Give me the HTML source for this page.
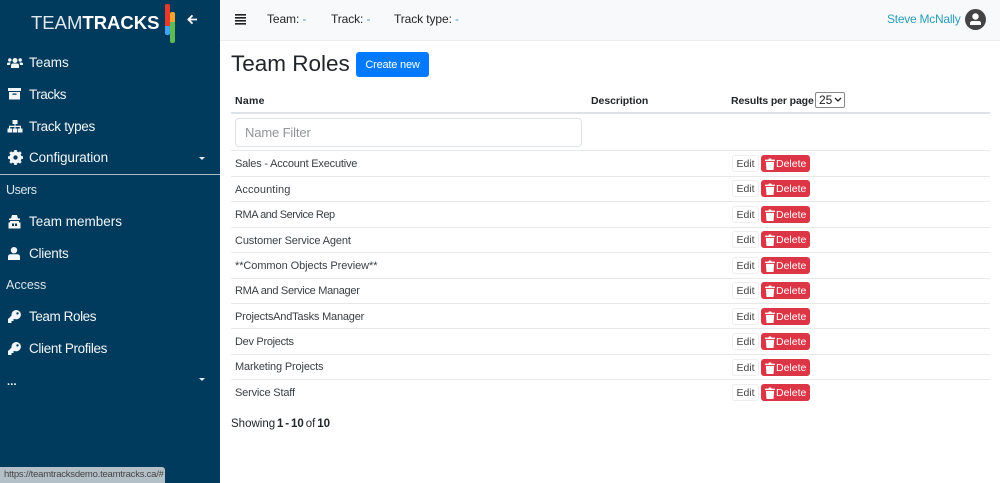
<!DOCTYPE html>
<html><head><meta charset="utf-8"><title>Team Roles</title>
<style>
*{box-sizing:border-box}
html,body{margin:0;padding:0;width:1000px;height:483px;overflow:hidden;background:#fff;font-family:"Liberation Sans",sans-serif}
.a{position:absolute;white-space:nowrap;line-height:1}
#side{position:absolute;left:0;top:0;width:220px;height:483px;background:#003a5c}
#top{position:absolute;left:220px;top:0;width:780px;height:41px;background:#f8f9fa;border-bottom:1px solid #e9ecef}
.n{color:#f2f6f8;font-size:13.5px;left:29px}
.sec{color:#dbe5ea;font-size:12.5px;left:6px}
.t{color:#212529;font-size:12px;letter-spacing:-.1px;top:13px}
.t span{color:#3d9bd8}
.th{font-size:10.5px;font-weight:bold;color:#212529;top:96px}
.r{color:#3a3f44;font-size:11px;left:235px}
.hr{position:absolute;left:231px;width:759px;height:1px;background:#e6e8ea}
.edit{position:absolute;left:732px;width:27px;height:17px;border:1px solid #eceef0;border-radius:3px;color:#444;font-size:10.5px;line-height:16px;text-align:center;background:#fff}
.del{position:absolute;left:761px;width:49px;height:17px;border-radius:3px;background:#dc3545;color:#fff;font-size:10.5px;line-height:18px;padding-left:15px}
.del svg{position:absolute;left:4px;top:2.5px}
svg{position:absolute;display:block}
</style></head><body>
<div id="side">
<div class="a" style="left:31px;top:11px;font-size:18.5px;line-height:24px;color:#dfe8ec">TEAM<b style="color:#fff">TRACKS</b></div>
<div style="position:absolute;left:165px;top:4px;width:5px;height:22px;background:#e8392c;border-radius:2px 2px 0 0"></div>
<div style="position:absolute;left:165px;top:26px;width:5px;height:9px;background:#3fa4ee;border-radius:0 0 2px 2px"></div>
<div style="position:absolute;left:170px;top:12px;width:5px;height:11px;background:#f5a52c;border-radius:2px 2px 0 0"></div>
<div style="position:absolute;left:170px;top:22px;width:5px;height:21px;background:#5dbb55;border-radius:0 0 2px 2px"></div>
<svg style="left:187px;top:14px" width="11" height="11" viewBox="0 0 12 12"><path d="M11 6H2M6 1.500 1.500 6 6 10.500" fill="none" stroke="#fff" stroke-width="2"/></svg>

<svg style="left:7px;top:57px" width="16" height="12" viewBox="0 0 16 12" fill="#f2f6f8"><circle cx="8" cy="3.500" r="2.500"/><circle cx="2.800" cy="3" r="1.700"/><circle cx="13.200" cy="3" r="1.700"/><path d="M4 11V8.500Q4 6.500 6 6.500H10Q12 6.500 12 8.500V11ZM0 8V7Q0 5.500 1.500 5.500H3.500L3 8ZM16 8V7Q16 5.500 14.500 5.500H12.500L13 8Z"/></svg>
<div class="a n" style="top:56px">Teams</div>
<svg style="left:8px;top:88px" width="13" height="12" viewBox="0 0 13 12" fill="#f2f6f8"><path d="M0 0H13V3H0ZM1 4H12V11.500H1ZM4.500 5.500V6.800H8.500V5.500Z" fill-rule="evenodd"/></svg>
<div class="a n" style="top:88px;letter-spacing:-.5px">Tracks</div>
<svg style="left:7px;top:120px" width="16" height="13" viewBox="0 0 16 13" fill="#f2f6f8"><path d="M5.500 0H10.500V4H8.500V5.800H14V8.500H15.500V12.500H11V8.500H12.800V7H8.500V8.500H10.300V12.500H5.700V8.500H7.500V7H3.200V8.500H5V12.500H.5V8.500H2V5.800H7.500V4H5.500Z"/></svg>
<div class="a n" style="top:120px;letter-spacing:-.3px">Track types</div>
<svg style="left:8px;top:150px" width="15" height="15" viewBox="0 0 16 16"><circle cx="8" cy="8" r="4.800" fill="none" stroke="#f2f6f8" stroke-width="3.400"/><path d="M8 0V16M0 8H16M2.300 2.300 13.700 13.700M13.700 2.300 2.300 13.700" stroke="#f2f6f8" stroke-width="2.800"/><circle cx="8" cy="8" r="2.300" fill="#003a5c"/></svg>
<div class="a n" style="top:151px;letter-spacing:-.1px">Configuration</div>
<div style="position:absolute;left:199px;top:157px;border:3px solid transparent;border-top:3px solid #e6edf0;border-bottom:0"></div>
<div style="position:absolute;left:0;top:174px;width:220px;height:1px;background:#a9bac4"></div>
<div class="a sec" style="top:184px;letter-spacing:-.4px">Users</div>
<svg style="left:8px;top:215px" width="13" height="14" viewBox="0 0 13 14" fill="#f2f6f8"><path d="M4 0H9L10 3.500H12V5H1V3.500H3ZM2 6H11V7.500H12.500V13.500H.5V7.500H2ZM4 8.500V11H6V8.500ZM7 8.500V11H9V8.500Z" fill-rule="evenodd"/></svg>
<div class="a n" style="top:215px">Team members</div>
<svg style="left:8px;top:247px" width="12" height="13" viewBox="0 0 12 13" fill="#f2f6f8"><circle cx="6" cy="3.200" r="3.200"/><path d="M0 13V10Q0 7.300 2.700 7.300H9.300Q12 7.300 12 10V13Z"/></svg>
<div class="a n" style="top:247px;letter-spacing:-.25px">Clients</div>
<div class="a sec" style="top:279px">Access</div>
<svg style="left:8px;top:310px" width="13" height="13" viewBox="0 0 13 13" fill="#f2f6f8"><circle cx="8.200" cy="4.700" r="4.700"/><path d="M4.500 4.500 0 9V13H3.500V11H5.500V9H7.500L8.500 7Z"/><circle cx="9.500" cy="3.400" r="1.200" fill="#003a5c"/></svg>
<div class="a n" style="top:310px;letter-spacing:-.42px">Team Roles</div>
<svg style="left:8px;top:342px" width="13" height="13" viewBox="0 0 13 13" fill="#f2f6f8"><circle cx="8.200" cy="4.700" r="4.700"/><path d="M4.500 4.500 0 9V13H3.500V11H5.500V9H7.500L8.500 7Z"/><circle cx="9.500" cy="3.400" r="1.200" fill="#003a5c"/></svg>
<div class="a n" style="top:342px;letter-spacing:-.35px">Client Profiles</div>
<div class="a" style="left:7px;top:377px;font-size:11px;color:#fff;font-weight:bold;letter-spacing:.2px">...</div>
<div style="position:absolute;left:199px;top:378px;border:3px solid transparent;border-top:3px solid #e6edf0;border-bottom:0"></div>
</div>

<div id="top"></div>
<svg style="left:235px;top:14px" width="11" height="11" viewBox="0 0 11 11" fill="#222"><path d="M0 0H11V1.600H0ZM0 3H11V4.600H0ZM0 6H11V7.600H0ZM0 9H11V10.600H0Z"/></svg>
<div class="a t" style="left:267px">Team: <span>-</span></div>
<div class="a t" style="left:331px">Track: <span>-</span></div>
<div class="a t" style="left:394px">Track type: <span>-</span></div>
<div class="a" style="left:887px;top:13px;font-size:12px;color:#2a9fb8;letter-spacing:-.25px">Steve McNally</div>
<svg style="left:965px;top:9px" width="21" height="21" viewBox="0 0 21 21"><circle cx="10.500" cy="10.500" r="10.500" fill="#444"/><circle cx="10.500" cy="7.500" r="3.200" fill="#fff"/><path d="M5 16V14.500Q5 12 7.500 12H13.500Q16 12 16 14.500V16Z" fill="#fff"/></svg>

<div class="a" style="left:231px;top:53px;font-size:22.5px;color:#212529">Team Roles</div>
<div style="position:absolute;left:356px;top:52px;width:73px;height:25px;background:#007bff;border-radius:3px;color:#fff;font-size:11px;line-height:26px;text-align:center;letter-spacing:-.2px">Create new</div>

<div class="a th" style="left:235px;letter-spacing:.3px">Name</div>
<div class="a th" style="left:591px;letter-spacing:-.05px">Description</div>
<div class="a th" style="left:731px;letter-spacing:-.12px">Results per page</div>
<div style="position:absolute;left:815px;top:92px;width:30px;height:16px;border:1px solid #888;border-radius:2px;background:#fff;font-size:12px;line-height:15px;padding-left:3px;color:#222">25</div>
<svg style="left:834px;top:97px" width="8" height="6" viewBox="0 0 8 6"><path d="M1 1 4 4 7 1" fill="none" stroke="#222" stroke-width="1.300"/></svg>
<div style="position:absolute;left:231px;top:112px;width:759px;height:2px;background:#dee2e6"></div>
<div style="position:absolute;left:235px;top:118px;width:347px;height:29px;border:1px solid #dfe2e6;border-radius:4px;background:#fff"></div>
<div class="a" style="left:245px;top:126px;font-size:13px;color:#90959a;letter-spacing:-.14px">Name Filter</div>

<div class="hr" style="top:150px"></div>
<div class="a r" style="top:159px;letter-spacing:-.2px">Sales - Account Executive</div><div class="edit" style="top:155px">Edit</div><div class="del" style="top:155px"><svg width="10" height="12" viewBox="0 0 9 11" fill="#fff"><path d="M0 1.500H3L3.500 .5H5.500L6 1.500H9V2.700H0ZM.7 3.500H8.300L7.700 11H1.300Z"/></svg>Delete</div>
<div class="hr" style="top:176px"></div>
<div class="a r" style="top:185px;letter-spacing:.1px">Accounting</div><div class="edit" style="top:180px">Edit</div><div class="del" style="top:180px"><svg width="10" height="12" viewBox="0 0 9 11" fill="#fff"><path d="M0 1.500H3L3.500 .5H5.500L6 1.500H9V2.700H0ZM.7 3.500H8.300L7.700 11H1.300Z"/></svg>Delete</div>
<div class="hr" style="top:201px"></div>
<div class="a r" style="top:210px;letter-spacing:-.45px">RMA and Service Rep</div><div class="edit" style="top:206px">Edit</div><div class="del" style="top:206px"><svg width="10" height="12" viewBox="0 0 9 11" fill="#fff"><path d="M0 1.500H3L3.500 .5H5.500L6 1.500H9V2.700H0ZM.7 3.500H8.300L7.700 11H1.300Z"/></svg>Delete</div>
<div class="hr" style="top:227px"></div>
<div class="a r" style="top:236px;letter-spacing:-.13px">Customer Service Agent</div><div class="edit" style="top:231px">Edit</div><div class="del" style="top:231px"><svg width="10" height="12" viewBox="0 0 9 11" fill="#fff"><path d="M0 1.500H3L3.500 .5H5.500L6 1.500H9V2.700H0ZM.7 3.500H8.300L7.700 11H1.300Z"/></svg>Delete</div>
<div class="hr" style="top:252px"></div>
<div class="a r" style="top:261px;letter-spacing:-.07px">**Common Objects Preview**</div><div class="edit" style="top:257px">Edit</div><div class="del" style="top:257px"><svg width="10" height="12" viewBox="0 0 9 11" fill="#fff"><path d="M0 1.500H3L3.500 .5H5.500L6 1.500H9V2.700H0ZM.7 3.500H8.300L7.700 11H1.300Z"/></svg>Delete</div>
<div class="hr" style="top:278px"></div>
<div class="a r" style="top:286px;letter-spacing:-.3px">RMA and Service Manager</div><div class="edit" style="top:282px">Edit</div><div class="del" style="top:282px"><svg width="10" height="12" viewBox="0 0 9 11" fill="#fff"><path d="M0 1.500H3L3.500 .5H5.500L6 1.500H9V2.700H0ZM.7 3.500H8.300L7.700 11H1.300Z"/></svg>Delete</div>
<div class="hr" style="top:303px"></div>
<div class="a r" style="top:312px;letter-spacing:-.2px">ProjectsAndTasks Manager</div><div class="edit" style="top:308px">Edit</div><div class="del" style="top:308px"><svg width="10" height="12" viewBox="0 0 9 11" fill="#fff"><path d="M0 1.500H3L3.500 .5H5.500L6 1.500H9V2.700H0ZM.7 3.500H8.300L7.700 11H1.300Z"/></svg>Delete</div>
<div class="hr" style="top:328px"></div>
<div class="a r" style="top:337px;letter-spacing:-.3px">Dev Projects</div><div class="edit" style="top:333px">Edit</div><div class="del" style="top:333px"><svg width="10" height="12" viewBox="0 0 9 11" fill="#fff"><path d="M0 1.500H3L3.500 .5H5.500L6 1.500H9V2.700H0ZM.7 3.500H8.300L7.700 11H1.300Z"/></svg>Delete</div>
<div class="hr" style="top:354px"></div>
<div class="a r" style="top:362px;letter-spacing:-.15px">Marketing Projects</div><div class="edit" style="top:359px">Edit</div><div class="del" style="top:359px"><svg width="10" height="12" viewBox="0 0 9 11" fill="#fff"><path d="M0 1.500H3L3.500 .5H5.500L6 1.500H9V2.700H0ZM.7 3.500H8.300L7.700 11H1.300Z"/></svg>Delete</div>
<div class="hr" style="top:379px"></div>
<div class="a r" style="top:388px;letter-spacing:-.18px">Service Staff</div><div class="edit" style="top:384px">Edit</div><div class="del" style="top:384px"><svg width="10" height="12" viewBox="0 0 9 11" fill="#fff"><path d="M0 1.500H3L3.500 .5H5.500L6 1.500H9V2.700H0ZM.7 3.500H8.300L7.700 11H1.300Z"/></svg>Delete</div>

<div class="a" style="left:231px;top:419px;font-size:11.5px;color:#212529;word-spacing:-1.3px">Showing <b>1 - 10</b> of <b>10</b></div>

<div class="a" style="left:0;top:467px;width:165px;height:16px;background:#b4c0c8;border-radius:0 3px 0 0;font-size:9.5px;line-height:16px;padding-left:4px;color:#444;letter-spacing:-.23px;overflow:hidden">https://teamtracksdemo.teamtracks.ca/#</div>
</body></html>
